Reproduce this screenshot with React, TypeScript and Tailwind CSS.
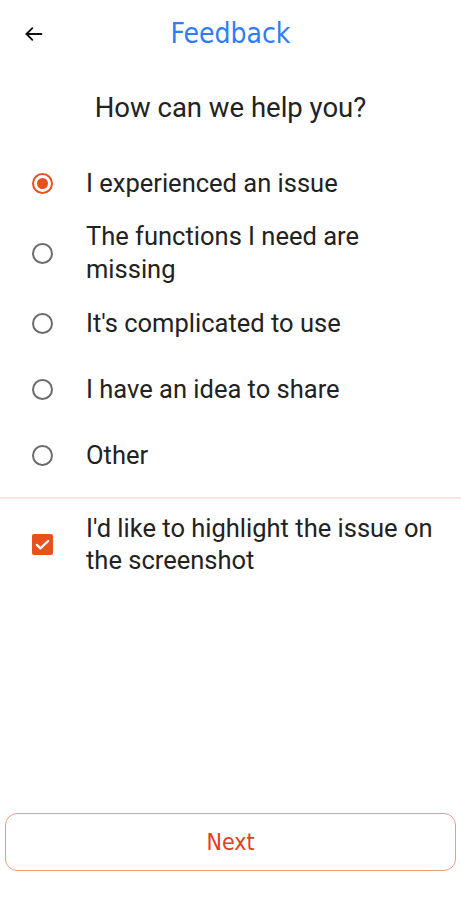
import { useState } from "react";

const options = [
  "I experienced an issue",
  "The functions I need are missing",
  "It's complicated to use",
  "I have an idea to share",
  "Other",
];

function Radio({ checked }: { checked: boolean }) {
  return (
    <span
      className={`flex h-[21px] w-[21px] shrink-0 items-center justify-center rounded-full border-2 ${
        checked ? "border-[#e8501e]" : "border-[#6b6b6b]"
      }`}
    >
      {checked && <span className="h-[11px] w-[11px] rounded-full bg-[#e8501e]" />}
    </span>
  );
}

export default function App() {
  const [selected, setSelected] = useState(0);
  const [highlight, setHighlight] = useState(true);

  return (
    <div className="flex h-[900px] w-[461px] flex-col bg-white font-['Roboto',sans-serif] text-[#222]">
      <header className="relative flex h-[68px] items-center justify-center">
        <button className="absolute left-[22px] top-[22px] p-0.5">
          <svg width="20" height="20" viewBox="0 0 24 24" fill="none" stroke="#111" strokeWidth="2.2" strokeLinecap="round" strokeLinejoin="round">
            <path d="M21 12H3" />
            <path d="M10 5l-7 7 7 7" />
          </svg>
        </button>
        <h1 className="font-['DejaVu_Sans',sans-serif] text-[28px] font-normal text-[#2f7cf6] [font-stretch:condensed]">
          Feedback
        </h1>
      </header>

      <p className="mt-[23px] text-center text-[27.5px] leading-[34px]">How can we help you?</p>

      <div className="mt-[25px] flex flex-col">
        {options.map((opt, i) => (
          <label
            key={opt}
            onClick={() => setSelected(i)}
            className="flex min-h-[66px] cursor-pointer items-center"
          >
            <span className="flex w-[86px] shrink-0 justify-center pr-[2px]">
              <Radio checked={selected === i} />
            </span>
            <span className="py-[4px] pr-[60px] text-[25.5px] leading-[33px]">{opt}</span>
          </label>
        ))}
      </div>

      <div className="mt-[9px] h-[2px] bg-[#fbe4dc]" />

      <label
        onClick={() => setHighlight(!highlight)}
        className="flex min-h-[90px] cursor-pointer items-center"
      >
        <span className="flex w-[86px] shrink-0 justify-center pr-[2px]">
          <span
            className={`flex h-[21px] w-[21px] items-center justify-center rounded-[2px] ${
              highlight ? "bg-[#e8501e]" : "border-2 border-[#6b6b6b]"
            }`}
          >
            {highlight && (
              <svg width="17" height="17" viewBox="0 0 24 24" fill="none" stroke="#fff" strokeWidth="3.2" strokeLinecap="round" strokeLinejoin="round">
                <path d="M4 12.5l5 5L20 7" />
              </svg>
            )}
          </span>
        </span>
        <span className="pr-[16px] text-[25.5px] leading-[32px]">
          I'd like to highlight the issue on the screenshot
        </span>
      </label>

      <div className="flex-1" />

      <div className="px-[5px] pb-[29px]">
        <button className="flex h-[58px] w-full items-center justify-center rounded-[12px] border-[1.5px] border-[#f09a84] bg-white font-['DejaVu_Sans',sans-serif] text-[23px] text-[#e2401c] [font-stretch:condensed]">
          Next
        </button>
      </div>
    </div>
  );
}
